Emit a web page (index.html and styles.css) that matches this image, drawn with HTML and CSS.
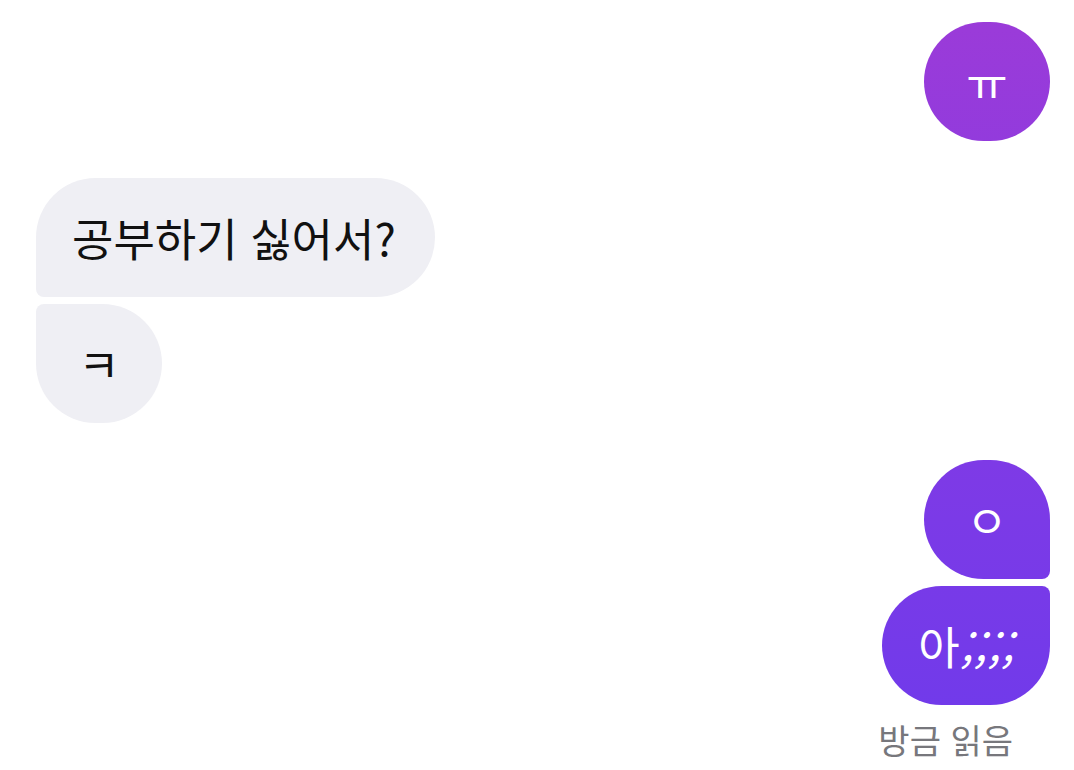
FILE: index.html
```html
<!DOCTYPE html>
<html lang="ko">
<head>
    <meta charset="UTF-8">
    <meta name="viewport" content="width=device-width, initial-scale=1.0">
    <title>채팅</title>
    <link rel="stylesheet" href="styles.css">
</head>
<body>
    <div class="chat">
        <!-- 내 메시지 -->
        <div class="group mine">
            <div class="bubble round">ㅠ</div>
        </div>

        <!-- 상대 메시지 -->
        <div class="group theirs">
            <div class="bubble first wide">공부하기 싫어서?</div>
            <div class="bubble last">ㅋ</div>
        </div>

        <div class="group mine">
            <div class="bubble first">ㅇ</div>
            <div class="bubble last">아<span class="dots">;;;;</span></div>
            <p class="read">방금 읽음</p>
        </div>
    </div>
</body>
</html>
```

FILE: styles.css
```css
* {
    margin: 0;
    padding: 0;
    box-sizing: border-box;
}

body {
    font-family: 'Noto Sans CJK KR', 'Noto Sans', sans-serif;
    background-color: #ffffff;
}

.chat {
    display: flex;
    flex-direction: column;
    gap: 37px;
    padding: 22px 24px 0 36px;
}

.group {
    display: flex;
    flex-direction: column;
    gap: 7px;
}

.mine {
    align-items: flex-end;
}

.theirs {
    align-items: flex-start;
}

.bubble {
    min-width: 126px;
    padding: 36px 36px;
    font-size: 45px;
    line-height: 47px;
    text-align: center;
    border-radius: 60px;
    white-space: nowrap;
}

.wide {
    padding-right: 39px;
}

.theirs .bubble {
    background: #efeff4;
    color: #111111;
}

.mine .bubble {
    color: #ffffff;
    /* 화면 전체 기준 그라데이션 */
    background: linear-gradient(180deg, #9c3bd8 0%, #7e3ae6 60%, #6e3aeb 100%);
    background-attachment: fixed;
}

.dots {
    letter-spacing: 1px;
    font-style: italic;
}

.theirs .first {
    border-bottom-left-radius: 8px;
}

.theirs .last {
    border-top-left-radius: 8px;
}

.mine .first {
    border-bottom-right-radius: 8px;
}

.mine .last {
    border-top-right-radius: 8px;
}

.read {
    margin-top: 6px;
    margin-right: 37px;
    font-size: 34px;
    line-height: 44px;
    color: #77777c;
}
```
